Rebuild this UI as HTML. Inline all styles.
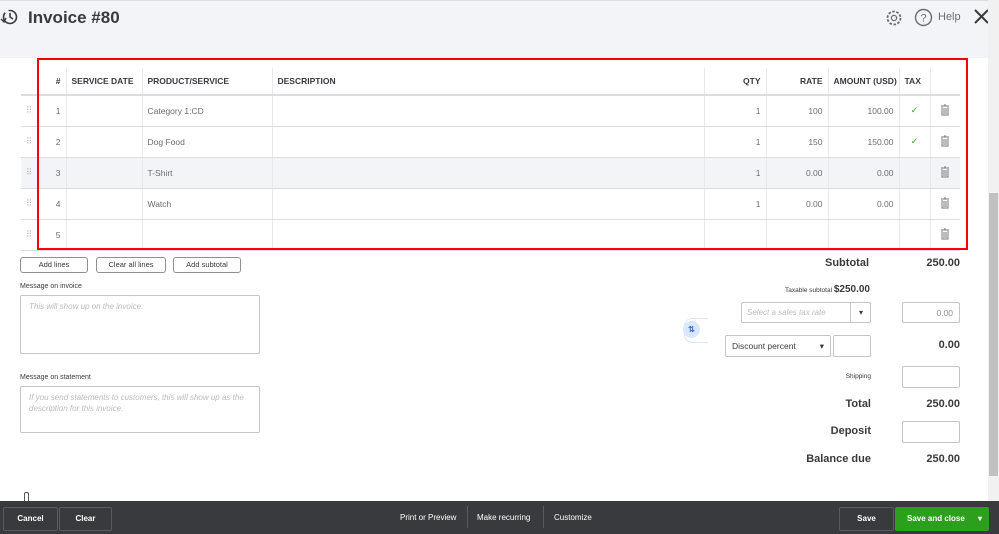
<!DOCTYPE html>
<html><head><meta charset="utf-8"><style>
*{box-sizing:border-box;margin:0;padding:0}
body{width:999px;height:534px;overflow:hidden;font-family:"Liberation Sans",sans-serif;background:#fff;position:relative;color:#393a3d}
.abs{position:absolute}
.hdr{left:0;top:0;width:988px;height:58px;background:#f3f4f7;border-top:1px solid #ddd}
.sb{left:988px;top:0;width:11px;height:501px;background:#f1f1f1}
.thumb{left:989px;top:193px;width:9px;height:283px;background:#c1c1c1}
table{position:absolute;left:21px;top:68px;border-collapse:collapse;font-size:8.5px;color:#6b6c72;table-layout:fixed;width:939px}
td,th{height:31px;border-bottom:1px solid #dcdde0;padding:0 5px;white-space:nowrap;overflow:hidden}
th{height:27px;font-weight:bold;color:#393a3d;text-align:left;border-bottom:2px solid #dcdde0;border-left:1px solid #e8e9ec}
td{border-left:1px solid #e8e9ec}
td.d,th.d{border-left:none}
.r{text-align:right}
.gray td{background:#f3f4f7}
.red{left:37px;top:58px;width:931px;height:192px;border:2px solid #f00}
.btn{height:16px;border:1px solid #8d9096;border-radius:3px;font-size:7.5px;text-align:center;line-height:14px;color:#393a3d}
.lbl{font-size:7px;color:#393a3d}
.ta{border:1px solid #c4c5c9;border-radius:2px;font-size:8px;color:#bbb;font-style:italic;padding:5px 8px;line-height:11px}
.in{border:1px solid #c4c5c9;border-radius:2px;height:21px;width:58px}
.b{font-weight:bold;font-size:11px;color:#393a3d;text-align:right}
.foot{left:0;top:501px;width:999px;height:33px;background:#393a3d}
.fb{top:507px;height:24px;border:1px solid #5a5b5f;border-radius:2px;color:#fff;font-size:8px;font-weight:bold;text-align:center;line-height:22px}
.ft{top:513px;color:#fff;font-size:8px}
.ck{color:#2ca01c;font-size:9px;text-align:center}
</style></head><body>
<div class="abs hdr"></div>
<svg class="abs" style="left:0;top:7px" width="20" height="20" viewBox="0 0 20 20"><circle cx="10" cy="10" r="6.5" fill="none" stroke="#393a3d" stroke-width="1.6" stroke-dasharray="25 4"/><path d="M10 6v4l3 2" fill="none" stroke="#393a3d" stroke-width="1.6"/><path d="M1 12l3 3 2-4" fill="none" stroke="#393a3d" stroke-width="1.4"/></svg>
<div class="abs" style="left:28px;top:8px;font-size:17px;font-weight:bold;color:#393a3d">Invoice #80</div>
<svg class="abs" style="left:885px;top:9px" width="18" height="18" viewBox="0 0 18 18"><circle cx="9" cy="9" r="6.5" fill="none" stroke="#6b6c72" stroke-width="1.8" stroke-dasharray="2.5 1.6"/><circle cx="9" cy="9" r="2.6" fill="none" stroke="#6b6c72" stroke-width="1.3"/></svg>
<svg class="abs" style="left:914px;top:8px" width="19" height="19" viewBox="0 0 19 19"><circle cx="9.5" cy="9.5" r="8" fill="none" stroke="#6b6c72" stroke-width="1.4"/><text x="9.5" y="13.5" font-size="11" text-anchor="middle" fill="#6b6c72" font-family="Liberation Sans">?</text></svg>
<div class="abs" style="left:938px;top:11px;font-size:11px;color:#6b6c72">Help</div>
<svg class="abs" style="left:973px;top:8px" width="17" height="17" viewBox="0 0 17 17"><path d="M2 2L15 15M15 2L2 15" stroke="#393a3d" stroke-width="2"/></svg>
<div class="abs sb"></div><div class="abs thumb"></div>
<svg width="0" height="0" style="position:absolute"><defs><symbol id="tr" viewBox="0 0 10 12"><path d="M1 2h8M4 1h2M2 3v8h6V3M4 4v6M6 4v6" fill="none" stroke="#8d9096" stroke-width="1.2"/></symbol></defs></svg>
<table>
<colgroup><col style="width:16px"><col style="width:29px"><col style="width:76px"><col style="width:130px"><col style="width:432px"><col style="width:62px"><col style="width:62px"><col style="width:71px"><col style="width:31px"><col style="width:30px"></colgroup>
<tr><th class="d"></th><th class="d r">#</th><th>SERVICE DATE</th><th>PRODUCT/SERVICE</th><th>DESCRIPTION</th><th class="r">QTY</th><th class="r">RATE</th><th class="r">AMOUNT (USD)</th><th>TAX</th><th></th></tr>
<tr><td class="d" style="color:#bbb">⠿</td><td class="d r">1</td><td></td><td>Category 1:CD</td><td></td><td class="r">1</td><td class="r">100</td><td class="r">100.00</td><td class="ck">✓</td><td style="text-align:center"><svg width="10" height="12"><use href="#tr"/></svg></td></tr>
<tr><td class="d" style="color:#bbb">⠿</td><td class="d r">2</td><td></td><td>Dog Food</td><td></td><td class="r">1</td><td class="r">150</td><td class="r">150.00</td><td class="ck">✓</td><td style="text-align:center"><svg width="10" height="12"><use href="#tr"/></svg></td></tr>
<tr class="gray"><td class="d" style="color:#bbb">⠿</td><td class="d r">3</td><td></td><td>T-Shirt</td><td></td><td class="r">1</td><td class="r">0.00</td><td class="r">0.00</td><td></td><td style="text-align:center"><svg width="10" height="12"><use href="#tr"/></svg></td></tr>
<tr><td class="d" style="color:#bbb">⠿</td><td class="d r">4</td><td></td><td>Watch</td><td></td><td class="r">1</td><td class="r">0.00</td><td class="r">0.00</td><td></td><td style="text-align:center"><svg width="10" height="12"><use href="#tr"/></svg></td></tr>
<tr><td class="d" style="color:#bbb">⠿</td><td class="d r">5</td><td></td><td></td><td></td><td></td><td></td><td></td><td></td><td style="text-align:center"><svg width="10" height="12"><use href="#tr"/></svg></td></tr>
</table>
<div class="abs red"></div>
<div class="abs btn" style="left:20px;top:257px;width:68px">Add lines</div>
<div class="abs btn" style="left:96px;top:257px;width:70px">Clear all lines</div>
<div class="abs btn" style="left:173px;top:257px;width:68px">Add subtotal</div>
<div class="abs lbl" style="left:20px;top:283px">Message on invoice</div>
<div class="abs ta" style="left:20px;top:295px;width:240px;height:59px">This will show up on the invoice.</div>
<div class="abs lbl" style="left:20px;top:374px">Message on statement</div>
<div class="abs ta" style="left:20px;top:386px;width:240px;height:47px">If you send statements to customers, this will show up as the description for this invoice.</div>
<div class="abs" style="left:24px;top:492px;width:5px;height:9px;border:1px solid #555;border-bottom:none;border-radius:2px 2px 0 0"></div>
<div class="abs b" style="left:760px;top:257px;width:109px">Subtotal</div>
<div class="abs b" style="left:880px;top:257px;width:80px">250.00</div>
<div class="abs" style="left:720px;top:284px;width:150px;text-align:right;font-size:6.5px;color:#393a3d">Taxable subtotal <b style="font-size:10px">$250.00</b></div>
<div class="abs" style="left:741px;top:302px;width:130px;height:21px;border:1px solid #c4c5c9;border-radius:2px;font-size:8px;font-style:italic;color:#bbb;padding:5px 5px"><span>Select a sales tax rate</span><span style="position:absolute;left:108px;top:0;height:19px;border-left:1px solid #c4c5c9;width:21px;text-align:center;color:#393a3d;font-style:normal;line-height:19px">▾</span></div>
<div class="abs in" style="left:902px;top:302px;font-size:8.5px;color:#8d9096;text-align:right;padding:5px 6px">0.00</div>
<div class="abs" style="left:684px;top:318px;width:24px;height:25px;border:1px solid #dbe6f5;border-right:none;border-radius:8px 0 0 8px"></div>
<div class="abs" style="left:683px;top:321px;width:17px;height:17px;border-radius:50%;background:#d9e8fb;color:#3b6fb6;font-size:8px;font-weight:bold;text-align:center;line-height:17px">⇅</div>
<div class="abs" style="left:725px;top:335px;width:106px;height:22px;border:1px solid #c4c5c9;border-radius:2px;font-size:8.5px;color:#393a3d;padding:5px 6px">Discount percent <span style="position:absolute;right:6px">▾</span></div>
<div class="abs in" style="left:833px;top:335px;width:38px;height:22px"></div>
<div class="abs b" style="left:880px;top:339px;width:80px">0.00</div>
<div class="abs lbl" style="left:800px;top:373px;width:71px;text-align:right;font-size:6.5px">Shipping</div>
<div class="abs in" style="left:902px;top:366px;height:22px"></div>
<div class="abs b" style="left:760px;top:398px;width:111px">Total</div>
<div class="abs b" style="left:880px;top:398px;width:80px">250.00</div>
<div class="abs b" style="left:760px;top:425px;width:111px">Deposit</div>
<div class="abs in" style="left:902px;top:421px;height:22px"></div>
<div class="abs b" style="left:760px;top:453px;width:111px">Balance due</div>
<div class="abs b" style="left:880px;top:453px;width:80px">250.00</div>
<div class="abs foot"></div>
<div class="abs fb" style="left:3px;width:55px">Cancel</div>
<div class="abs fb" style="left:59px;width:53px">Clear</div>
<div class="abs ft" style="left:400px">Print or Preview</div>
<div class="abs" style="left:467px;top:506px;height:22px;border-left:1px solid #5a5b5f"></div>
<div class="abs ft" style="left:477px">Make recurring</div>
<div class="abs" style="left:543px;top:506px;height:22px;border-left:1px solid #5a5b5f"></div>
<div class="abs ft" style="left:554px">Customize</div>
<div class="abs fb" style="left:839px;width:55px">Save</div>
<div class="abs fb" style="left:895px;width:94px;background:#2ca01c;border-color:#2ca01c;text-align:left;padding-left:11px">Save and close<span style="position:absolute;right:6px">▾</span></div>
</body></html>
